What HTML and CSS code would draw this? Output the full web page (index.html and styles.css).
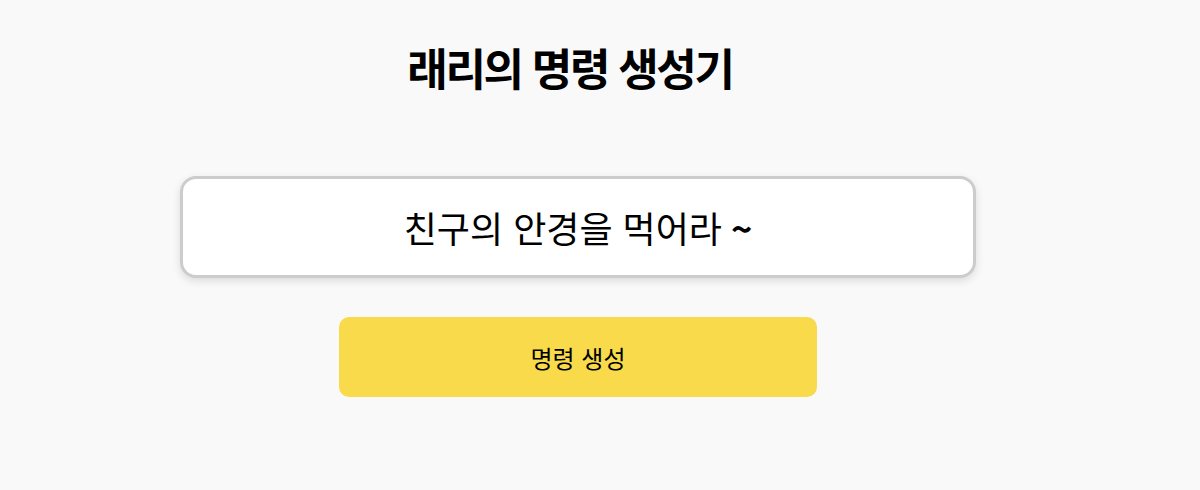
FILE: index.html
```html
<!DOCTYPE html>
<html lang="ko">
<head>
<meta charset="utf-8">
<link rel="stylesheet" href="styles.css">
</head>
<body>
<main class="app">
  <h1 class="title">래리의 명령 생성기</h1>
  <div class="command-box">친구의 안경을 먹어라 <span class="tilde">~</span></div>
  <button class="generate">명령 생성</button>
</main>
</body>
</html>
```

FILE: styles.css
```css
html, body {
  margin: 0;
  padding: 0;
  background: #f9f9f9;
  font-family: "Noto Sans CJK KR", "Noto Sans", sans-serif;
  color: #111;
}
.app {
  width: 796px;
  margin-left: 180px;
  display: flex;
  flex-direction: column;
  align-items: center;
}
.title {
  margin: 35px 16px 0 0;
  font-size: 44px;
  font-weight: 700;
  line-height: 64px;
  letter-spacing: -2.3px;
  color: #000;
}
.command-box {
  box-sizing: border-box;
  width: 796px;
  height: 102px;
  margin-top: 77px;
  background: #fff;
  border: 3px solid #cccccc;
  border-radius: 16px;
  box-shadow: 0 3px 8px rgba(0,0,0,0.12);
  display: flex;
  align-items: center;
  justify-content: center;
  gap: 0.25em;
  font-size: 36px;
  color: #000;
}
.tilde {
  font-weight: 700;
}
.generate {
  margin-top: 39px;
  width: 478px;
  height: 80px;
  border: none;
  border-radius: 10px;
  background: #f9da4b;
  font-family: inherit;
  font-size: 24px;
  color: #000;
  cursor: pointer;
}
```
